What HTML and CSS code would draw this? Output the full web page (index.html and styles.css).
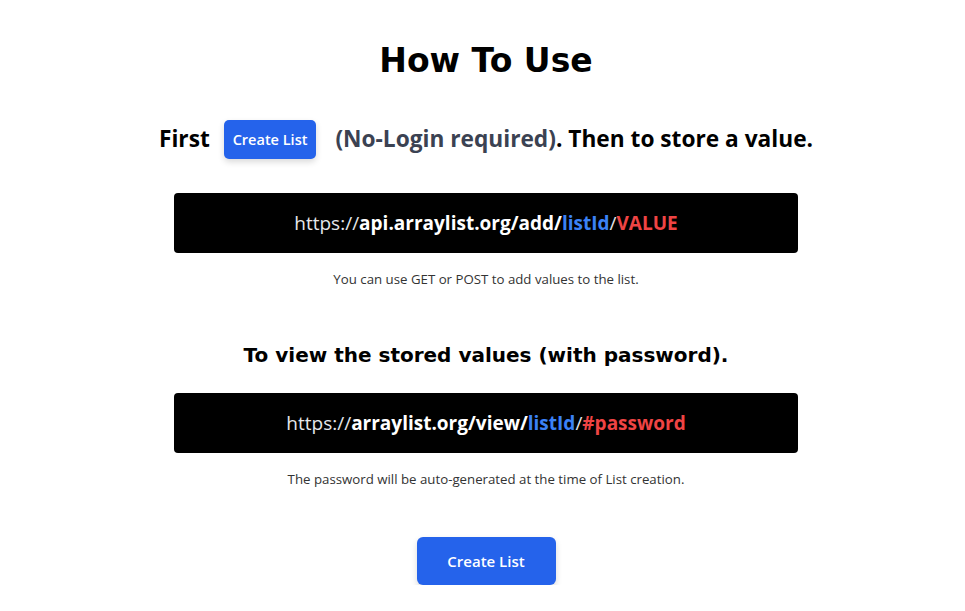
FILE: index.html
```html
<!DOCTYPE html>
<html>
<head>
    <title>How To Use</title>
    <link rel="stylesheet" href="styles.css">
</head>
<body>

<div class="page">
    <h1 class="title">How To Use</h1>

    <p class="step">
        First
        <button class="btn btn-small">Create List</button>
        <span class="muted">(No-Login required)</span>. Then to store a value.
    </p>

    <div class="url-box">
        <span class="scheme">https://</span><b>api.arraylist.org/add/</b><b class="id">listId</b><span class="slash">/</span><b class="val">VALUE</b>
    </div>
    <p class="note">You can use GET or POST to add values to the list.</p>

    <h2 class="heading">To view the stored values (with password).</h2>

    <div class="url-box">
        <span class="scheme">https://</span><b>arraylist.org/view/</b><b class="id">listId</b><span class="slash">/</span><b class="val">#password</b>
    </div>
    <p class="note">The password will be auto-generated at the time of List creation.</p>

    <button class="btn btn-big">Create List</button>
</div>

</body>
</html>
```

FILE: styles.css
```css
body {
    margin: 0;
    padding: 0 0 0 7px;
    background-color: #fff;
    color: #000;
    font-family: "Open Sans", "Noto Sans", sans-serif;
}

.page {
    width: 624px;
    margin: 0 auto;
    padding-top: 38px;
    display: flex;
    flex-direction: column;
    align-items: center;
    text-align: center;
}

.title {
    font-family: "DejaVu Sans", Verdana, sans-serif;
    font-size: 33px;
    font-weight: bold;
    line-height: 46px;
    margin: 0;
}

.step {
    font-size: 22.7px;
    font-weight: bold;
    line-height: 40px;
    margin: 35px 0 0;
    white-space: nowrap;
}

.muted {
    color: #3b4252;
}

.btn {
    background-color: #2563eb;
    color: #fff;
    border: none;
    font-family: "Open Sans", "Noto Sans", sans-serif;
    font-weight: 600;
    cursor: pointer;
    box-shadow: 0 3px 6px rgba(0, 0, 0, 0.15);
}

.btn-small {
    font-size: 14.5px;
    height: 39px;
    padding: 0 9px;
    border-radius: 5px;
    margin: 0 13px 0 8px;
    vertical-align: middle;
    position: relative;
    top: -1px;
}

.btn-big {
    font-size: 15px;
    width: 139px;
    height: 48px;
    border-radius: 6px;
    margin-top: 49px;
}

.url-box {
    box-sizing: border-box;
    width: 624px;
    height: 60px;
    margin-top: 33px;
    background-color: #000;
    border-radius: 4px;
    display: flex;
    align-items: center;
    justify-content: center;
    font-size: 19px;
    color: #fff;
}

.url-box b {
    font-weight: bold;
}

.scheme, .slash {
    color: #e5e7eb;
}

.id {
    color: #3b82f6;
}

.val {
    color: #ef4444;
}

.note {
    font-size: 13.25px;
    color: #333;
    margin: 17px 0 0;
    line-height: 18px;
}

.heading {
    font-family: "DejaVu Sans", Verdana, sans-serif;
    font-size: 20px;
    font-weight: bold;
    margin: 52px 0 0;
    line-height: 30px;
}

.heading + .url-box {
    margin-top: 23px;
}

.heading + .url-box + .note {
    margin-top: 17px;
}
```
